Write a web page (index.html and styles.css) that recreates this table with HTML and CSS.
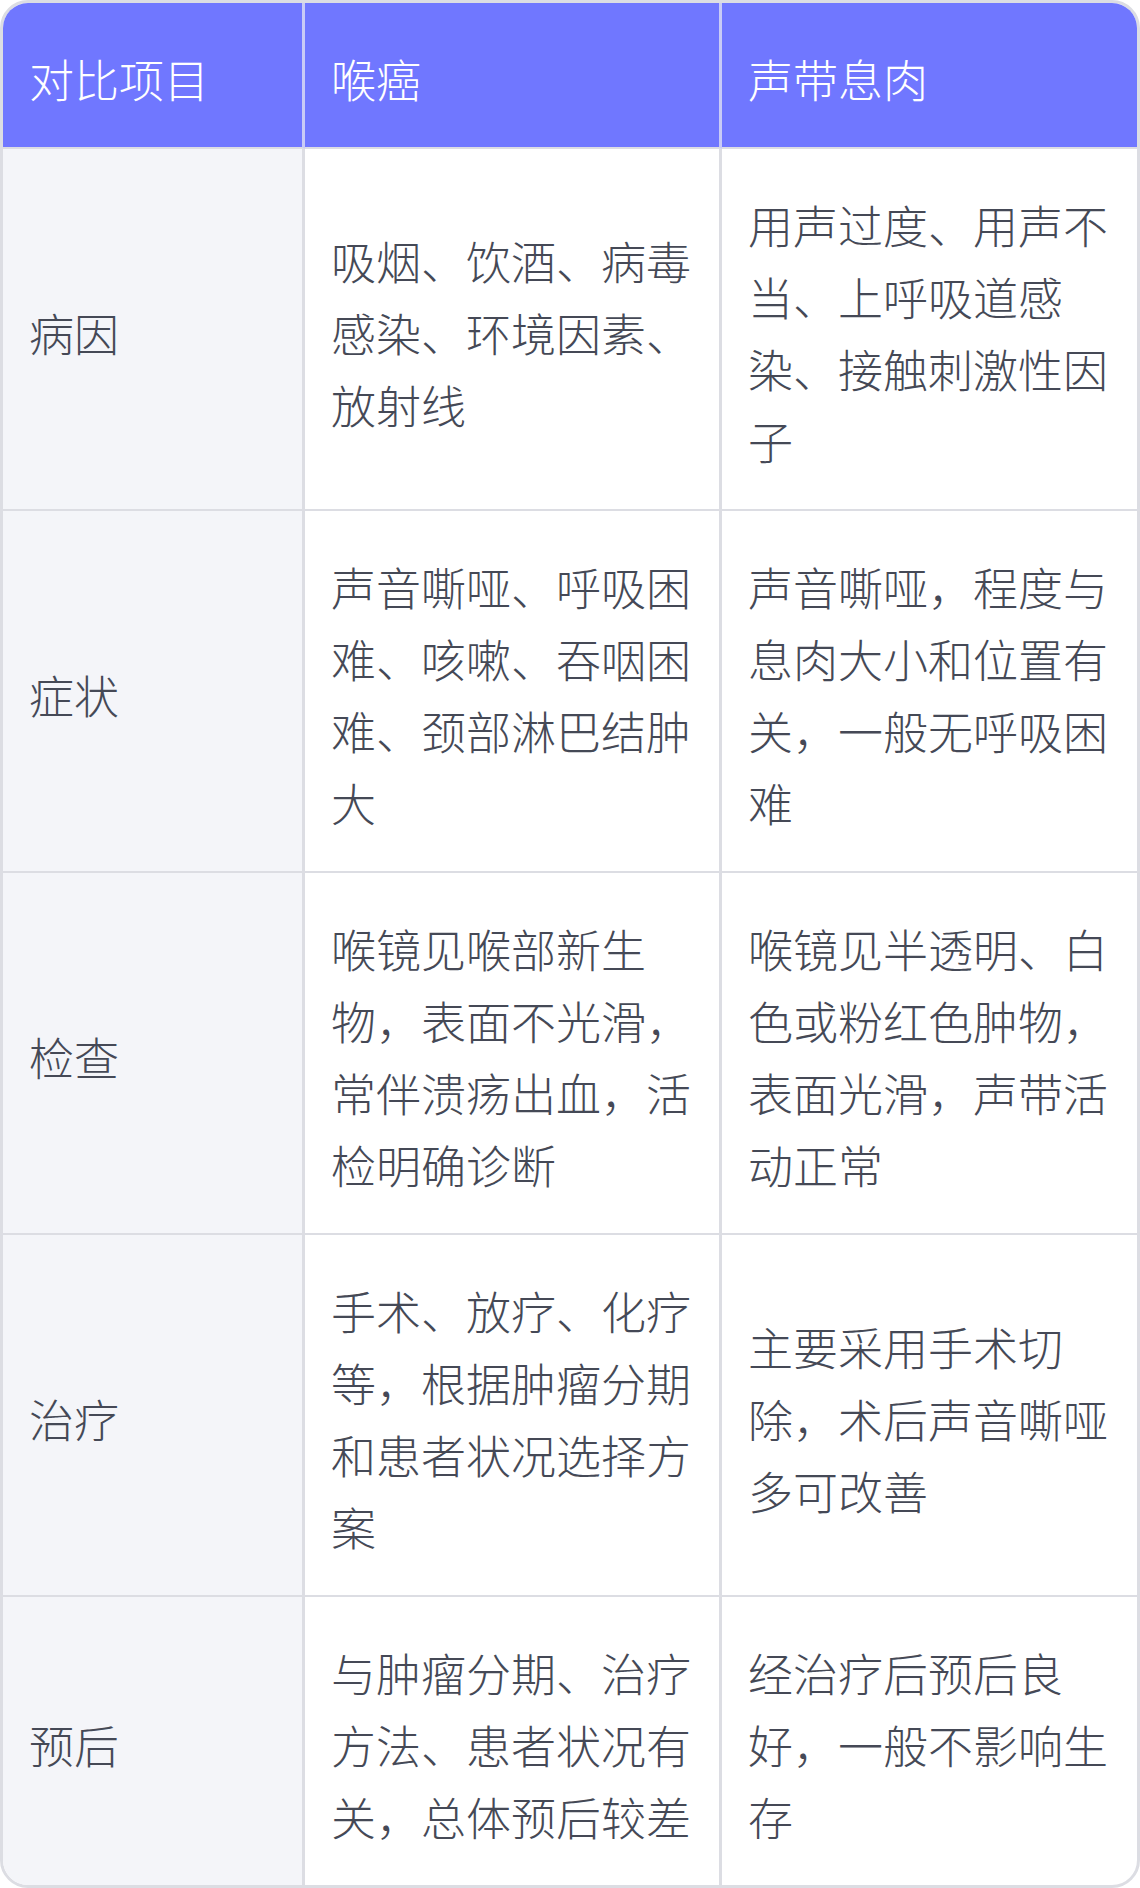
FILE: index.html
```html
<!DOCTYPE html>
<html lang="zh-CN">
<head>
    <meta charset="UTF-8">
    <meta name="viewport" content="width=device-width, initial-scale=1.0">
    <title>喉癌与声带息肉对比</title>
    <link rel="stylesheet" href="styles.css">
</head>
<body>
    <div class="table-wrap">
        <table class="compare-table">
            <colgroup>
                <col class="col-item">
                <col class="col-a">
                <col class="col-b">
            </colgroup>
            <thead>
                <tr>
                    <th>对比项目</th>
                    <th>喉癌</th>
                    <th>声带息肉</th>
                </tr>
            </thead>
            <tbody>
                <tr>
                    <td class="item">病因</td>
                    <td>吸烟、饮酒、病毒感染、环境因素、放射线</td>
                    <td>用声过度、用声不当、上呼吸道感染、接触刺激性因子</td>
                </tr>
                <tr>
                    <td class="item">症状</td>
                    <td>声音嘶哑、呼吸困难、咳嗽、吞咽困难、颈部淋巴结肿大</td>
                    <td>声音嘶哑，程度与息肉大小和位置有关，一般无呼吸困难</td>
                </tr>
                <tr>
                    <td class="item">检查</td>
                    <td>喉镜见喉部新生物，表面不光滑，常伴溃疡出血，活检明确诊断</td>
                    <td>喉镜见半透明、白色或粉红色肿物，表面光滑，声带活动正常</td>
                </tr>
                <tr>
                    <td class="item">治疗</td>
                    <td>手术、放疗、化疗等，根据肿瘤分期和患者状况选择方案</td>
                    <td>主要采用手术切除，术后声音嘶哑多可改善</td>
                </tr>
                <tr>
                    <td class="item">预后</td>
                    <td>与肿瘤分期、治疗方法、患者状况有关，总体预后较差</td>
                    <td>经治疗后预后良好，一般不影响生存</td>
                </tr>
            </tbody>
        </table>
    </div>
</body>
</html>
```

FILE: styles.css
```css
/* 基本页面 */
body {
    margin: 0;
    background-color: #ffffff;
    font-family: "Noto Sans CJK SC", "Noto Sans", sans-serif;
    color: #454956;
}

.table-wrap {
    border: 3px solid #dcdde3;
    border-radius: 28px;
    overflow: hidden;
}

.compare-table {
    width: 100%;
    table-layout: fixed;
    border-collapse: separate;
    border-spacing: 0;
    font-size: 45px;
    font-weight: 300;
    line-height: 72px;
}

.col-item {
    width: 302px;
}

.col-a {
    width: 417px;
}

.compare-table th,
.compare-table td {
    padding: 40px 26px 32px;
    text-align: left;
    vertical-align: middle;
    border-right: 3px solid #dcdde3;
    border-bottom: 2px solid #dcdde3;
}

.compare-table th:last-child,
.compare-table td:last-child {
    border-right: none;
}

.compare-table tbody tr:last-child td {
    border-bottom: none;
}

/* 表头 */
.compare-table th {
    background-color: #7077ff;
    color: #ffffff;
    font-weight: 300;
    border-right-color: #c9cbf6;
}

/* 第一列 */
.compare-table td.item {
    background-color: #f4f5f9;
}
```
